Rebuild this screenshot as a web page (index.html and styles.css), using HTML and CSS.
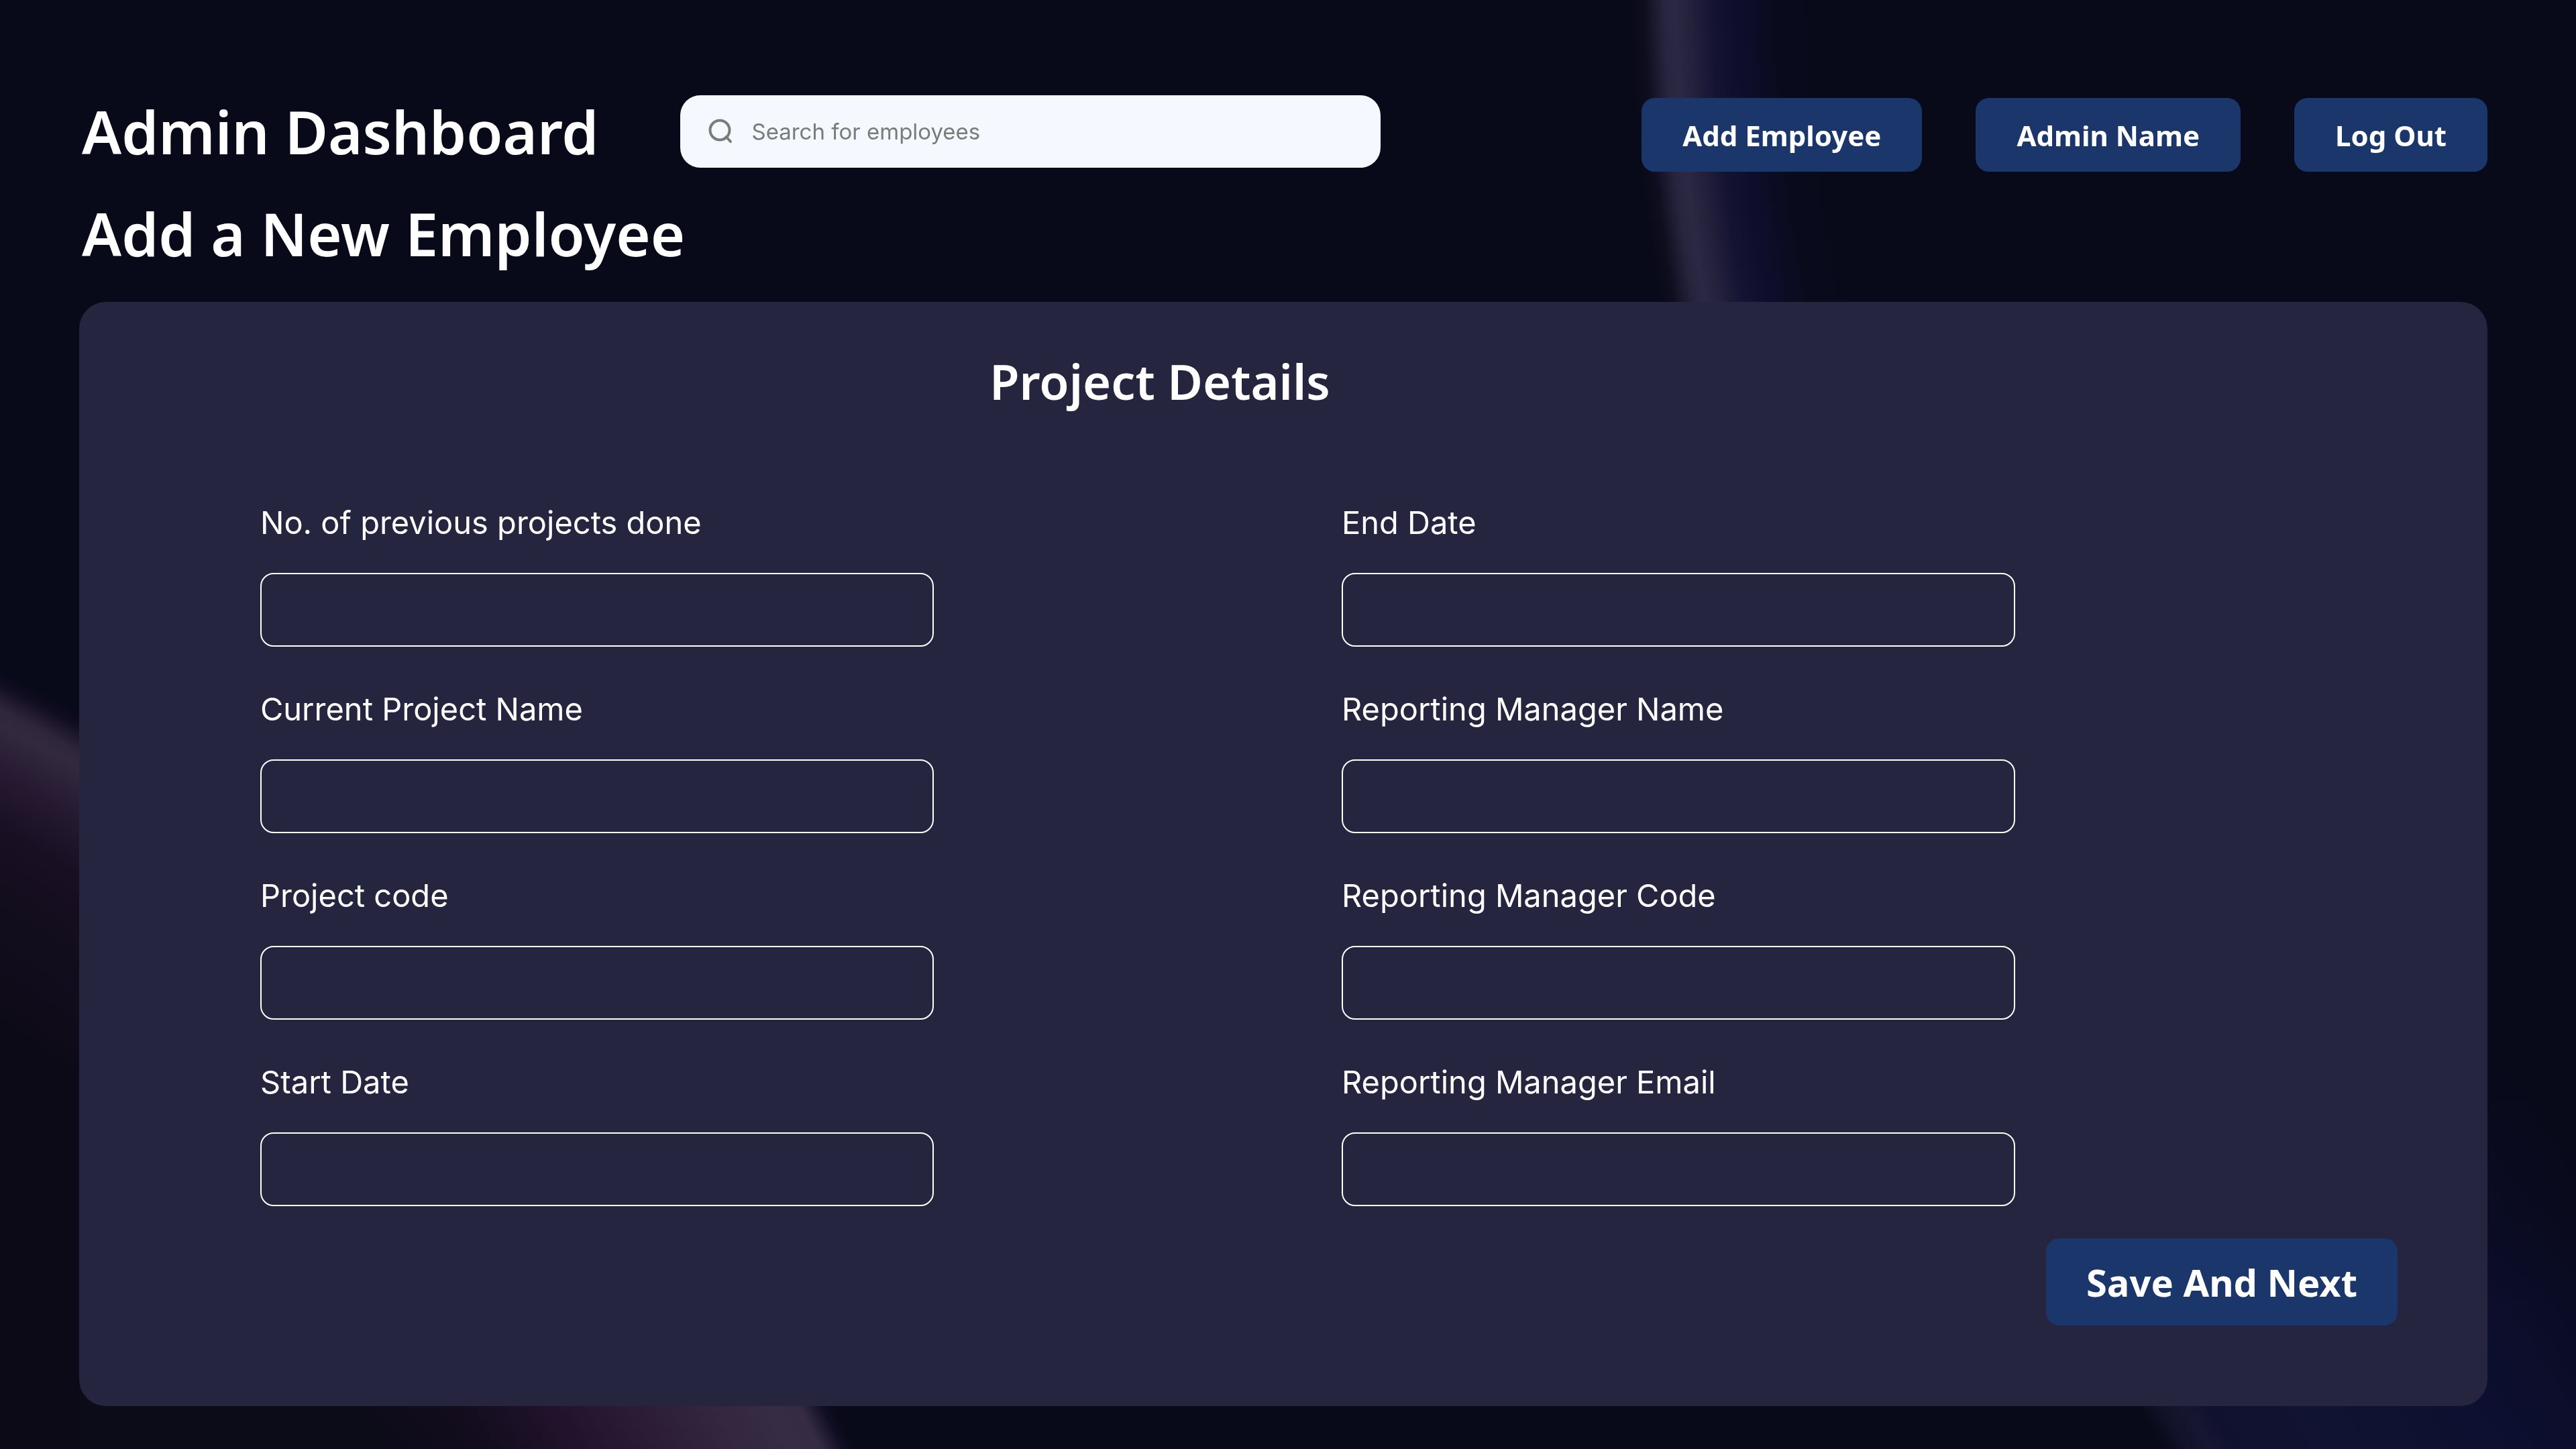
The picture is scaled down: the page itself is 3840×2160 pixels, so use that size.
FILE: index.html
```html
<!DOCTYPE html>
<html lang="en">
<head>
<meta charset="utf-8">
<title>Admin Dashboard</title>
<meta name="viewport" content="width=device-width, initial-scale=1">
<link rel="stylesheet" href="styles.css">
</head>
<body>
<svg class="backdrop" viewBox="0 0 3840 2160" preserveAspectRatio="xMidYMid slice" aria-hidden="true">
  <defs>
    <radialGradient id="arc-top" gradientUnits="userSpaceOnUse" cx="5345" cy="-60" r="2915">
      <stop offset="0.9" stop-color="#080919"/>
      <stop offset="0.925" stop-color="#090b1c"/>
      <stop offset="0.945" stop-color="#0e0e2c"/>
      <stop offset="0.958" stop-color="#141332"/>
      <stop offset="0.968" stop-color="#211f3a"/>
      <stop offset="0.977" stop-color="#2b2843"/>
      <stop offset="0.983" stop-color="#27253e"/>
      <stop offset="0.993" stop-color="#0f0e1f"/>
      <stop offset="1" stop-color="#080919"/>
    </radialGradient>
    <radialGradient id="arc-left" gradientUnits="userSpaceOnUse" cx="-1181" cy="3331" r="2615">
      <stop offset="0.82" stop-color="#0d0a18"/>
      <stop offset="0.88" stop-color="#120d1c"/>
      <stop offset="0.92" stop-color="#190f23"/>
      <stop offset="0.95" stop-color="#261b32"/>
      <stop offset="0.972" stop-color="#33293f"/>
      <stop offset="0.98" stop-color="#2f263b"/>
      <stop offset="0.993" stop-color="#100d20"/>
      <stop offset="1" stop-color="#080919"/>
    </radialGradient>
    <radialGradient id="arc-bottom" gradientUnits="userSpaceOnUse" cx="-550" cy="3022" r="2018">
      <stop offset="0.7" stop-color="#0c0b18"/>
      <stop offset="0.76" stop-color="#120c1d"/>
      <stop offset="0.83" stop-color="#24142e"/>
      <stop offset="0.91" stop-color="#33243d"/>
      <stop offset="0.96" stop-color="#362d44"/>
      <stop offset="0.977" stop-color="#352c43"/>
      <stop offset="0.992" stop-color="#110e23"/>
      <stop offset="1" stop-color="#080919"/>
    </radialGradient>
    <linearGradient id="glow" gradientUnits="userSpaceOnUse" x1="3195" y1="2110" x2="3840" y2="1717">
      <stop offset="0" stop-color="#080919"/>
      <stop offset="0.04" stop-color="#12122a"/>
      <stop offset="0.08" stop-color="#161630"/>
      <stop offset="0.12" stop-color="#10112f"/>
      <stop offset="0.3" stop-color="#101331"/>
      <stop offset="0.6" stop-color="#0d0f30"/>
      <stop offset="0.85" stop-color="#0a0c24"/>
      <stop offset="1" stop-color="#080919"/>
    </linearGradient>
    <linearGradient id="glow-fade" x1="0" y1="0" x2="0" y2="1">
      <stop offset="0" stop-color="#080919"/>
      <stop offset="1" stop-color="#080919" stop-opacity="0"/>
    </linearGradient>
  </defs>
  <rect width="3840" height="2160" fill="#080919"/>
  <rect x="2380" width="700" height="600" fill="url(#arc-top)"/>
  <rect y="900" width="400" height="1260" fill="url(#arc-left)"/>
  <rect x="118" y="2000" width="1482" height="160" fill="url(#arc-bottom)"/>
  <rect x="3100" y="1400" width="740" height="760" fill="url(#glow)"/>
  <rect x="3100" y="1400" width="740" height="560" fill="url(#glow-fade)"/>
</svg>

<div class="page">
  <header class="topbar">
    <h1 class="page-title">Admin Dashboard</h1>
    <label class="search">
      <svg class="search-icon" viewBox="0 0 48 48" aria-hidden="true">
        <circle cx="23" cy="22" r="14.5"/>
        <path d="M32.5 32 39 39"/>
      </svg>
      <input class="search-input" type="search" placeholder="Search for employees" aria-label="Search for employees">
    </label>
    <nav class="actions">
      <button class="button" type="button">Add Employee</button>
      <button class="button" type="button">Admin Name</button>
      <button class="button" type="button">Log Out</button>
    </nav>
  </header>
  <h2 class="page-title page-subtitle">Add a New Employee</h2>

  <form class="panel">
    <h3 class="panel-title">Project Details</h3>
    <div class="fields">
      <div class="column">
        <div class="field"><label for="previous">No. of previous projects done</label><input id="previous" type="text"></div>
        <div class="field"><label for="project">Current Project Name</label><input id="project" type="text"></div>
        <div class="field"><label for="code">Project code</label><input id="code" type="text"></div>
        <div class="field"><label for="start">Start Date</label><input id="start" type="text"></div>
      </div>
      <div class="column">
        <div class="field"><label for="end">End Date</label><input id="end" type="text"></div>
        <div class="field"><label for="manager">Reporting Manager Name</label><input id="manager" type="text"></div>
        <div class="field"><label for="manager-code">Reporting Manager Code</label><input id="manager-code" type="text"></div>
        <div class="field"><label for="manager-email">Reporting Manager Email</label><input id="manager-email" type="text"></div>
      </div>
    </div>
    <div class="panel-footer">
      <button class="button button-large" type="button">Save And Next</button>
    </div>
  </form>
</div>
</body>
</html>
```
FILE: styles.css
```css
* {
  box-sizing: border-box;
}

body {
  margin: 0;
  background: #080919;
  color: #fff;
  font-family: "Noto Sans", sans-serif;
}

.backdrop {
  position: fixed;
  inset: 0;
  width: 100%;
  height: 100%;
  z-index: -1;
}

.page {
  padding: 136px 132px 64px 118px;
}

.topbar {
  display: flex;
  align-items: center;
}

.page-title {
  margin: 0;
  padding-left: 4px;
  font-size: 88px;
  font-weight: 600;
  line-height: 120px;
  white-space: nowrap;
}

.page-subtitle {
  margin: 32px 0 42px;
}

.search {
  display: flex;
  align-items: center;
  gap: 22px;
  flex: 0 1 1044px;
  height: 108px;
  margin-left: 122px;
  padding: 0 36px;
  border-radius: 30px;
  background: #f5f8ff;
}

.search-icon {
  flex: none;
  width: 48px;
  height: 48px;
  fill: none;
  stroke: #757f78;
  stroke-width: 4;
  stroke-linecap: round;
}

.search-input {
  flex: 1;
  min-width: 0;
  padding: 0;
  border: 0;
  outline: 0;
  background: none;
  color: #757f78;
  font-family: Inter, sans-serif;
  font-size: 33px;
}

.search-input::placeholder {
  color: #757f78;
  opacity: 1;
}

.actions {
  display: flex;
  align-self: flex-end;
  gap: 80px;
  margin-left: auto;
}

.button {
  height: 110px;
  padding: 0 61px;
  border: 0;
  border-radius: 20px;
  background: #1a366b;
  color: #fff;
  font-family: inherit;
  font-size: 42px;
  font-weight: 700;
  white-space: nowrap;
}

.button-large {
  height: 130px;
  padding: 0 60px;
  font-size: 56px;
}

.panel {
  padding: 70px 134px 120px 270px;
  border-radius: 40px;
  background: #252540;
}

.panel-title {
  margin: 0 232px 130px 0;
  padding-right: 272px;
  font-size: 72px;
  font-weight: 600;
  line-height: 96px;
  text-align: center;
}

.fields {
  display: grid;
  grid-template-columns: 1fr 1fr;
  gap: 608px;
  padding-right: 570px;
}

.column {
  display: flex;
  flex-direction: column;
  gap: 60px;
}

.field {
  display: flex;
  flex-direction: column;
  gap: 42px;
}

.field label {
  font-family: Inter, sans-serif;
  font-size: 47px;
  line-height: 66px;
  white-space: nowrap;
}

.field input {
  width: 100%;
  height: 110px;
  padding: 0 32px;
  border: 2px solid #fff;
  border-radius: 20px;
  outline: 0;
  background: transparent;
  color: #fff;
  font-family: Inter, sans-serif;
  font-size: 47px;
}

.panel-footer {
  display: flex;
  justify-content: flex-end;
  margin-top: 48px;
}
```
